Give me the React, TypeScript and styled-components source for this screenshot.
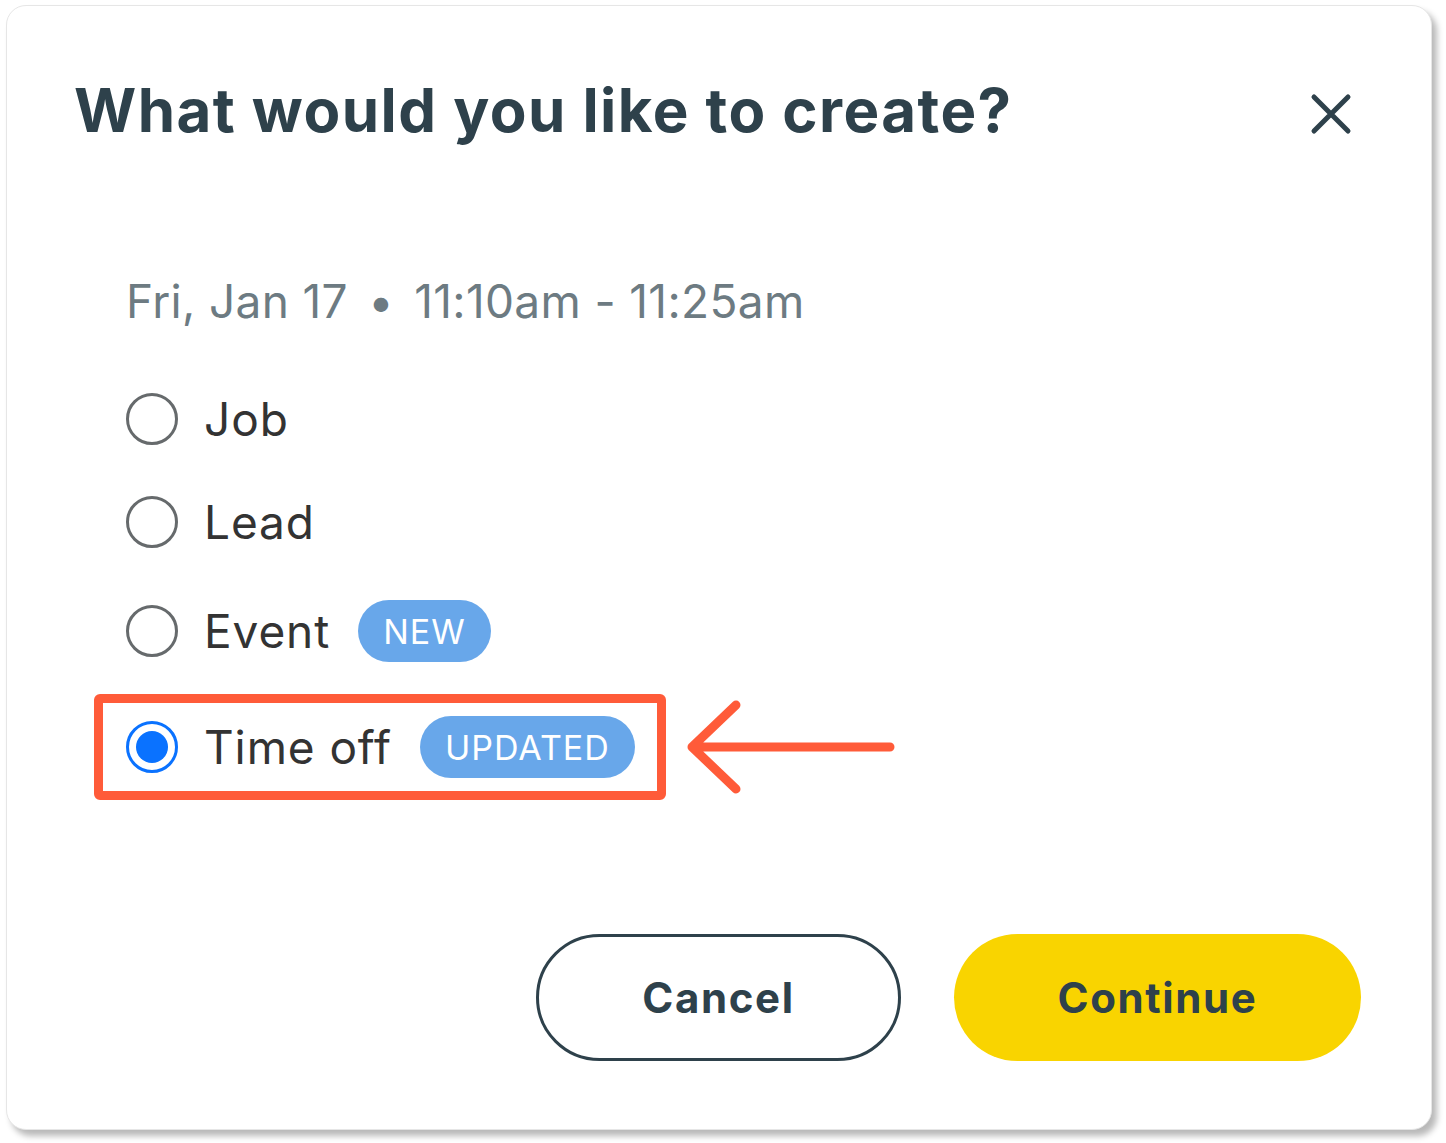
import React from 'react';
import styled, { createGlobalStyle } from 'styled-components';

interface Option {
    label: string;
    badge?: string;
    selected?: boolean;
}

const options: Option[] = [
    { label: 'Job' },
    { label: 'Lead' },
    { label: 'Event', badge: 'NEW' },
    { label: 'Time off', badge: 'UPDATED', selected: true },
];

const GlobalStyle = createGlobalStyle`
    html, body {
        margin: 0;
        padding: 0;
        background: #ffffff;
    }

    body {
        font-family: Inter, 'Noto Sans', sans-serif;
    }
`;

const Page = styled.div`
    padding: 5px 0 0 6px;
    width: 1446px;
    height: 1143px;
    box-sizing: border-box;
`;

const Card = styled.section`
    display: flex;
    flex-direction: column;
    width: 1426px;
    height: 1125px;
    box-sizing: border-box;
    padding: 68px 70px 68px 67px;
    background: #ffffff;
    border: 1px solid #e6e6e6;
    border-radius: 20px;
    box-shadow: 5px 6px 6px rgba(0, 0, 0, 0.28);
`;

const Header = styled.header`
    display: flex;
    align-items: flex-start;
    justify-content: space-between;
`;

const Title = styled.h1`
    margin: 0;
    color: #2e414b;
    font-size: 60px;
    font-weight: 700;
    line-height: 72px;
    letter-spacing: 1.45px;
`;

const CloseButton = styled.button`
    display: flex;
    align-items: center;
    justify-content: center;
    width: 46px;
    height: 46px;
    margin: 17px 7px 0 0;
    padding: 0;
    border: none;
    background: none;
    cursor: pointer;
`;

const Body = styled.div`
    display: flex;
    flex-direction: column;
    gap: 47px;
    padding: 127px 0 0 52px;
`;

const DateLine = styled.p`
    margin: 0 0 15px;
    color: #6d7b82;
    font-size: 46px;
    font-weight: 400;
    line-height: 56px;
    letter-spacing: 0.35px;
`;

const Dot = styled.span`
    margin: 0 20px;
`;

const Row = styled.label<{ $shift?: boolean }>`
    display: flex;
    align-items: center;
    gap: 26px;
    min-height: 52px;
    margin-top: ${({ $shift }) => ($shift ? '3px' : '0')};
`;

const Highlighted = styled.div`
    display: flex;
    align-items: center;
    margin: -15px 0 -22px -32px;
`;

const HighlightBox = styled.div`
    padding: 13px 22px 13px 23px;
    border: 9px solid #ff5b39;
    border-radius: 6px;
`;

const Radio = styled.span<{ $checked?: boolean }>`
    display: flex;
    align-items: center;
    justify-content: center;
    flex: none;
    width: 52px;
    height: 52px;
    box-sizing: border-box;
    border-radius: 50%;
    border: 3px solid ${({ $checked }) => ($checked ? '#0a72ff' : '#666a6c')};

    &::after {
        content: '';
        display: ${({ $checked }) => ($checked ? 'block' : 'none')};
        width: 32px;
        height: 32px;
        border-radius: 50%;
        background: #0a72ff;
    }
`;

const Label = styled.span`
    color: #333333;
    font-size: 46px;
    font-weight: 400;
    line-height: 56px;
    letter-spacing: 0.9px;
`;

const Badge = styled.span`
    display: inline-flex;
    align-items: center;
    height: 62px;
    margin-left: 2px;
    padding: 0 25px;
    border-radius: 31px;
    background: #68a7ea;
    color: #ffffff;
    font-size: 34px;
    font-weight: 400;
    letter-spacing: 1px;
`;

const Arrow = styled.svg`
    margin-left: 20px;
`;

const Footer = styled.footer`
    display: flex;
    justify-content: flex-end;
    gap: 53px;
    margin-top: auto;
`;

const Button = styled.button<{ $primary?: boolean }>`
    width: ${({ $primary }) => ($primary ? '407px' : '365px')};
    height: 127px;
    border-radius: 64px;
    border: ${({ $primary }) => ($primary ? 'none' : '3px solid #2e414b')};
    background: ${({ $primary }) => ($primary ? '#f9d400' : '#ffffff')};
    color: #2e414b;
    font-family: Inter, 'Noto Sans', sans-serif;
    font-size: 42px;
    font-weight: 700;
    letter-spacing: 1.6px;
    cursor: pointer;
`;

const OptionRow: React.FC<{ option: Option; shift?: boolean }> = ({ option, shift }) => (
    <Row $shift={shift}>
        <Radio $checked={option.selected} />
        <Label>{option.label}</Label>
        {option.badge && <Badge>{option.badge}</Badge>}
    </Row>
);

const App: React.FC = () => (
    <Page>
        <GlobalStyle />
        <Card>
            <Header>
                <Title>What would you like to create?</Title>
                <CloseButton aria-label="Close">
                    <svg width="46" height="46" viewBox="0 0 46 46">
                        <path
                            d="M6 6 L40 40 M40 6 L6 40"
                            stroke="#2e414b"
                            strokeWidth="5"
                            strokeLinecap="round"
                        />
                    </svg>
                </CloseButton>
            </Header>
            <Body>
                <DateLine>
                    Fri, Jan 17<Dot>•</Dot>11:10am - 11:25am
                </DateLine>
                {options.map((option) =>
                    option.selected ? (
                        <Highlighted key={option.label}>
                            <HighlightBox>
                                <OptionRow option={option} />
                            </HighlightBox>
                            <Arrow width="210" height="96" viewBox="0 0 210 96">
                                <path
                                    d="M6 48 L204 48 M50 6 L6 48 L50 90"
                                    fill="none"
                                    stroke="#ff5b39"
                                    strokeWidth="9"
                                    strokeLinecap="round"
                                    strokeLinejoin="round"
                                />
                            </Arrow>
                        </Highlighted>
                    ) : (
                        <OptionRow key={option.label} option={option} shift={!!option.badge} />
                    ),
                )}
            </Body>
            <Footer>
                <Button>Cancel</Button>
                <Button $primary>Continue</Button>
            </Footer>
        </Card>
    </Page>
);

export default App;
